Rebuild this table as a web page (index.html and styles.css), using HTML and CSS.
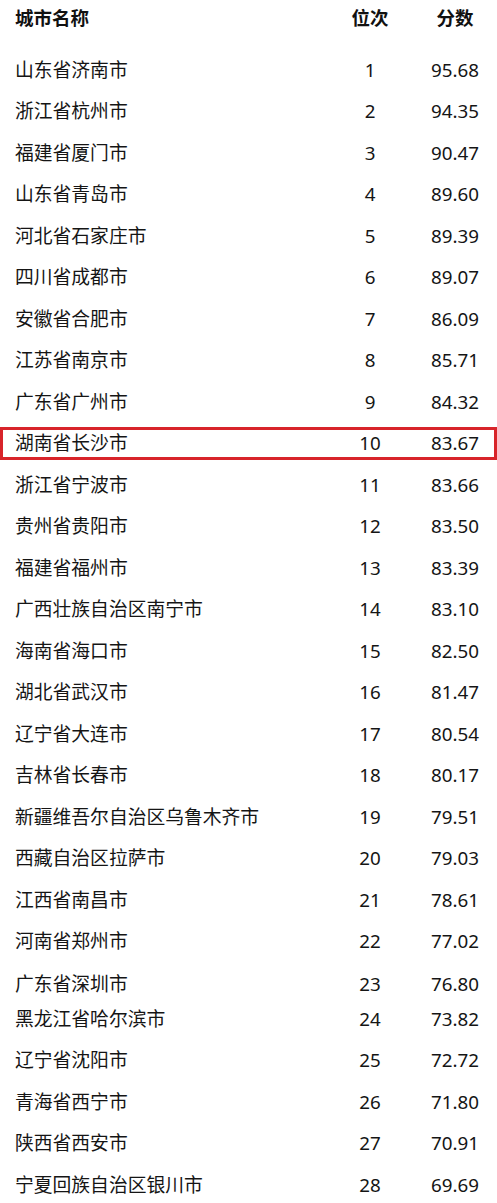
FILE: index.html
```html
<!DOCTYPE html>
<html lang="zh-CN">
<head>
<meta charset="utf-8">
<title>城市排名</title>
<link rel="stylesheet" href="styles.css">
</head>
<body>
<div class="table">
  <div class="row head"><span class="name">城市名称</span><span class="rank">位次</span><span class="score">分数</span></div>
  <div class="row"><span class="name">山东省济南市</span><span class="rank">1</span><span class="score">95.68</span></div>
  <div class="row"><span class="name">浙江省杭州市</span><span class="rank">2</span><span class="score">94.35</span></div>
  <div class="row"><span class="name">福建省厦门市</span><span class="rank">3</span><span class="score">90.47</span></div>
  <div class="row"><span class="name">山东省青岛市</span><span class="rank">4</span><span class="score">89.60</span></div>
  <div class="row"><span class="name">河北省石家庄市</span><span class="rank">5</span><span class="score">89.39</span></div>
  <div class="row"><span class="name">四川省成都市</span><span class="rank">6</span><span class="score">89.07</span></div>
  <div class="row"><span class="name">安徽省合肥市</span><span class="rank">7</span><span class="score">86.09</span></div>
  <div class="row"><span class="name">江苏省南京市</span><span class="rank">8</span><span class="score">85.71</span></div>
  <div class="row"><span class="name">广东省广州市</span><span class="rank">9</span><span class="score">84.32</span></div>
  <div class="row highlight"><span class="name">湖南省长沙市</span><span class="rank">10</span><span class="score">83.67</span></div>
  <div class="row"><span class="name">浙江省宁波市</span><span class="rank">11</span><span class="score">83.66</span></div>
  <div class="row"><span class="name">贵州省贵阳市</span><span class="rank">12</span><span class="score">83.50</span></div>
  <div class="row"><span class="name">福建省福州市</span><span class="rank">13</span><span class="score">83.39</span></div>
  <div class="row"><span class="name">广西壮族自治区南宁市</span><span class="rank">14</span><span class="score">83.10</span></div>
  <div class="row"><span class="name">海南省海口市</span><span class="rank">15</span><span class="score">82.50</span></div>
  <div class="row"><span class="name">湖北省武汉市</span><span class="rank">16</span><span class="score">81.47</span></div>
  <div class="row"><span class="name">辽宁省大连市</span><span class="rank">17</span><span class="score">80.54</span></div>
  <div class="row"><span class="name">吉林省长春市</span><span class="rank">18</span><span class="score">80.17</span></div>
  <div class="row"><span class="name">新疆维吾尔自治区乌鲁木齐市</span><span class="rank">19</span><span class="score">79.51</span></div>
  <div class="row"><span class="name">西藏自治区拉萨市</span><span class="rank">20</span><span class="score">79.03</span></div>
  <div class="row"><span class="name">江西省南昌市</span><span class="rank">21</span><span class="score">78.61</span></div>
  <div class="row"><span class="name">河南省郑州市</span><span class="rank">22</span><span class="score">77.02</span></div>
  <div class="row short"><span class="name">广东省深圳市</span><span class="rank">23</span><span class="score">76.80</span></div>
  <div class="row"><span class="name">黑龙江省哈尔滨市</span><span class="rank">24</span><span class="score">73.82</span></div>
  <div class="row"><span class="name">辽宁省沈阳市</span><span class="rank">25</span><span class="score">72.72</span></div>
  <div class="row"><span class="name">青海省西宁市</span><span class="rank">26</span><span class="score">71.80</span></div>
  <div class="row"><span class="name">陕西省西安市</span><span class="rank">27</span><span class="score">70.91</span></div>
  <div class="row"><span class="name">宁夏回族自治区银川市</span><span class="rank">28</span><span class="score">69.69</span></div>
</div>
</body>
</html>
```
FILE: styles.css
```css
html, body {
  margin: 0;
  padding: 0;
  background: #ffffff;
}

body {
  width: 497px;
  height: 1203px;
  overflow: hidden;
  font-family: "Noto Sans", "Noto Sans CJK SC", sans-serif;
  font-size: 18.8px;
  color: #151515;
}

.table {
  display: flex;
  flex-direction: column;
}

.row {
  display: grid;
  grid-template-columns: 305px 60px 70px;
  column-gap: 20px;
  align-items: center;
  height: 41.5px;
  padding-left: 15px;
  box-sizing: border-box;
  line-height: 1;
  white-space: nowrap;
}

.row.head {
  height: 36px;
  margin-bottom: 13.25px;
  font-size: 18.5px;
  font-weight: bold;
  color: #111;
}

.rank,
.score {
  text-align: center;
}

.row.highlight {
  height: 33px;
  margin: 4.25px 0;
  border: 3px solid #d8242a;
  padding-left: 12px;
}

.row.short {
  height: 36px;
  align-items: end;
  padding-bottom: 4px;
}
```
